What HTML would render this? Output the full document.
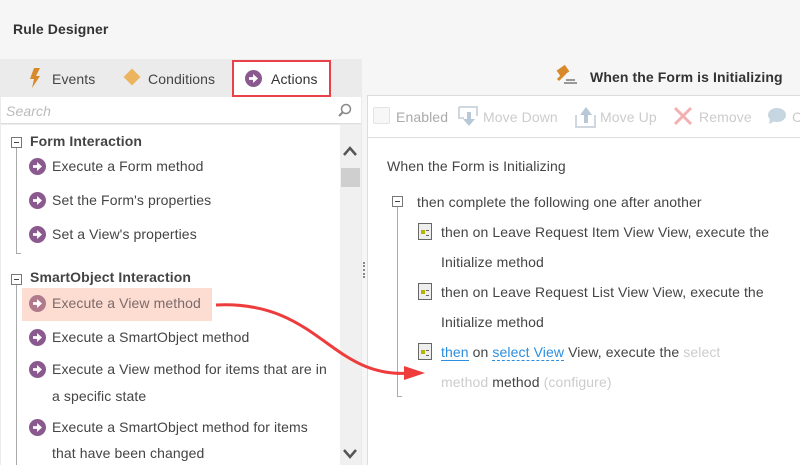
<!DOCTYPE html>
<html><head><style>
*{margin:0;padding:0;box-sizing:border-box}
body{width:800px;height:465px;overflow:hidden;background:#f6f6f6;font-family:"Liberation Sans",sans-serif;font-size:14px;color:#444;position:relative;letter-spacing:0.1px}
.a{position:absolute}
.ic{position:absolute;width:17px;height:17px;border-radius:50%;background:#8a5a8e}
.ic:after{content:"";position:absolute;left:4px;top:4px;width:9px;height:9px;background:#fff;clip-path:polygon(0 35%,45% 35%,45% 0,100% 50%,45% 100%,45% 65%,0 65%)}
.t{position:absolute;white-space:nowrap;margin-top:1px}
.pg{position:absolute;width:14px;height:17px;border:1.5px solid #666;background:#eee}
.pg:after{content:"";position:absolute;left:2px;top:6px;width:4px;height:4px;background:#b4b400}
.pg:before{content:"";position:absolute;left:7px;top:6px;width:3px;height:4px;border-top:1px solid #666;border-bottom:1px solid #666}
.mn{position:absolute;width:11px;height:11px;border:1px solid #777;background:#fff}
.mn:after{content:"";position:absolute;left:2px;top:4px;width:5px;height:1px;background:#444}
</style></head><body>
<div class="t" style="left:13px;top:20px;font-weight:bold;font-size:14px;color:#333">Rule Designer</div>
<div class="a" style="left:0;top:59px;width:362px;height:406px;background:#ebebeb"></div>
<svg class="a" style="left:28px;top:68px" width="14" height="20"><path d="M6 0 L12 0 L8 8 L12 8 L4 20 L6 11 L2 11 Z" fill="#d8892a"/></svg>
<div class="t" style="left:52px;top:70px">Events</div>
<div class="a" style="left:126px;top:71px;width:12px;height:12px;background:#ebb560;transform:rotate(45deg)"></div>
<div class="t" style="left:148px;top:70px">Conditions</div>
<div class="a" style="left:232px;top:60px;width:99px;height:37px;border:2px solid #e8414a;background:#fff"></div>
<div class="ic" style="left:245px;top:70px"></div>
<div class="t" style="left:271px;top:70px;color:#333">Actions</div>
<div class="a" style="left:1px;top:97px;width:360px;height:27px;background:#fff;border-bottom:1px solid #ddd"></div>
<div class="t" style="left:6px;top:102px;color:#bbb;font-style:italic">Search</div>
<svg class="a" style="left:338px;top:103px" width="14" height="14"><circle cx="8" cy="6" r="4.5" fill="none" stroke="#888" stroke-width="1.5"/><path d="M5 9 L1 13" stroke="#888" stroke-width="2"/></svg>
<div class="a" style="left:1px;top:125px;width:339px;height:340px;background:#fff"></div>
<div class="a" style="left:340px;top:125px;width:21px;height:340px;background:#f0f0f0"></div>
<svg class="a" style="left:342px;top:145px" width="16" height="12"><path d="M2 10 L8 3 L14 10" fill="none" stroke="#555" stroke-width="2.5"/></svg>
<div class="a" style="left:341px;top:168px;width:19px;height:19px;background:#cfcfcf"></div>
<svg class="a" style="left:342px;top:448px" width="16" height="12"><path d="M2 2 L8 9 L14 2" fill="none" stroke="#555" stroke-width="2.5"/></svg>
<div class="a" style="left:16px;top:148px;width:1px;height:105px;background:#aaa"></div>
<div class="a" style="left:16px;top:253px;width:5px;height:1px;background:#aaa"></div>
<div class="mn" style="left:11px;top:137px"></div>
<div class="t" style="left:30px;top:132px;font-weight:bold;color:#444">Form Interaction</div>
<div class="ic" style="left:29px;top:158px"></div><div class="t" style="left:52px;top:157px">Execute a Form method</div>
<div class="ic" style="left:29px;top:192px"></div><div class="t" style="left:52px;top:191px">Set the Form's properties</div>
<div class="ic" style="left:29px;top:226px"></div><div class="t" style="left:52px;top:225px">Set a View's properties</div>
<div class="a" style="left:16px;top:282px;width:1px;height:183px;background:#aaa"></div>
<div class="mn" style="left:11px;top:274px"></div>
<div class="t" style="left:30px;top:268px;font-weight:bold">SmartObject Interaction</div>
<div class="a" style="left:22px;top:288px;width:190px;height:33px;background:#fddcd2"></div>
<div class="ic" style="left:29px;top:295px;background:#b07a8c"></div><div class="t" style="left:52px;top:294px;color:#7a6a6a">Execute a View method</div>
<div class="ic" style="left:29px;top:329px"></div><div class="t" style="left:52px;top:328px">Execute a SmartObject method</div>
<div class="ic" style="left:29px;top:361px"></div><div class="t" style="left:52px;top:360px">Execute a View method for items that are in</div>
<div class="t" style="left:52px;top:387px">a specific state</div>
<div class="ic" style="left:29px;top:419px"></div><div class="t" style="left:52px;top:418px">Execute a SmartObject method for items</div>
<div class="t" style="left:52px;top:444px">that have been changed</div>
<div class="a" style="left:363px;top:262px;width:2px;height:16px;border-left:2px dotted #888"></div>
<svg class="a" style="left:556px;top:64px" width="24" height="22"><rect x="2" y="3" width="10" height="8" fill="#d8892a" transform="rotate(-35 7 7)"/><path d="M9 9 L2 16" stroke="#d8892a" stroke-width="3"/><rect x="10" y="15" width="9" height="2" fill="#999"/><rect x="8" y="18" width="13" height="2" fill="#999"/></svg>
<div class="t" style="left:590px;top:68px;font-weight:bold;color:#333">When the Form is Initializing</div>
<div class="a" style="left:367px;top:95px;width:433px;height:370px;background:#fff;border-left:1px solid #ddd;border-top:1px solid #ddd"></div>
<div class="a" style="left:367px;top:137px;width:433px;height:1px;background:#ddd"></div>
<div class="a" style="left:373px;top:107px;width:17px;height:17px;border:1px solid #e3e3e3;background:#f7f7f7;border-radius:2px"></div>
<div class="t" style="left:396px;top:108px;color:#aaa">Enabled</div>
<svg class="a" style="left:458px;top:106px" width="22" height="22"><path d="M1 1 H19 V10 M1 1 V12 H6" fill="none" stroke="#cfd8e0" stroke-width="2"/><path d="M9 6 H13 V13 H17 L11 20 L5 13 H9 Z" fill="#b8c8d6"/></svg>
<div class="t" style="left:483px;top:108px;color:#ccc">Move Down</div>
<svg class="a" style="left:575px;top:105px" width="22" height="24"><path d="M1 10 V22 H20 V10" fill="none" stroke="#cfd8e0" stroke-width="2"/><path d="M9 18 H13 V10 H17 L11 2 L5 10 H9 Z" fill="#b8c8d6"/></svg>
<div class="t" style="left:600px;top:108px;color:#ccc">Move Up</div>
<svg class="a" style="left:673px;top:106px" width="20" height="20"><path d="M2 2 L18 18 M18 2 L2 18" stroke="#f2b0b0" stroke-width="3"/></svg>
<div class="t" style="left:699px;top:108px;color:#ccc">Remove</div>
<svg class="a" style="left:767px;top:107px" width="20" height="18"><ellipse cx="10" cy="8" rx="9" ry="7" fill="#c6d6e0"/><path d="M3 12 L2 17 L8 14Z" fill="#c6d6e0"/></svg>
<div class="t" style="left:792px;top:108px;color:#ccc">C</div>
<div class="t" style="left:387px;top:157px">When the Form is Initializing</div>
<div class="mn" style="left:392px;top:196px"></div>
<div class="a" style="left:397px;top:207px;width:1px;height:190px;background:#aaa"></div>
<div class="a" style="left:397px;top:396px;width:5px;height:1px;background:#aaa"></div>
<div class="t" style="left:417px;top:193px">then complete the following one after another</div>
<div class="pg" style="left:418px;top:223px"></div>
<div class="t" style="left:441px;top:223px">then on Leave Request Item View View, execute the</div>
<div class="t" style="left:441px;top:253px">Initialize method</div>
<div class="pg" style="left:418px;top:283px"></div>
<div class="t" style="left:441px;top:283px">then on Leave Request List View View, execute the</div>
<div class="t" style="left:441px;top:313px">Initialize method</div>
<div class="pg" style="left:418px;top:343px"></div>
<div class="t" style="left:441px;top:343px"><span style="color:#2b8ee0;border-bottom:1px solid #2b8ee0">then</span> on <span style="color:#2b8ee0;border-bottom:1px dashed #2b8ee0">select View</span> View, execute the <span style="color:#ccc">select</span></div>
<div class="t" style="left:441px;top:373px"><span style="color:#ccc">method</span> method <span style="color:#ccc">(configure)</span></div>
<svg class="a" style="left:0;top:0" width="800" height="465"><path d="M216 305 C320 300 330 380 412 373" fill="none" stroke="#ee3b3b" stroke-width="3"/><path d="M404 366 L425 373 L404 380 Z" fill="#ee3b3b"/></svg>
</body></html>
